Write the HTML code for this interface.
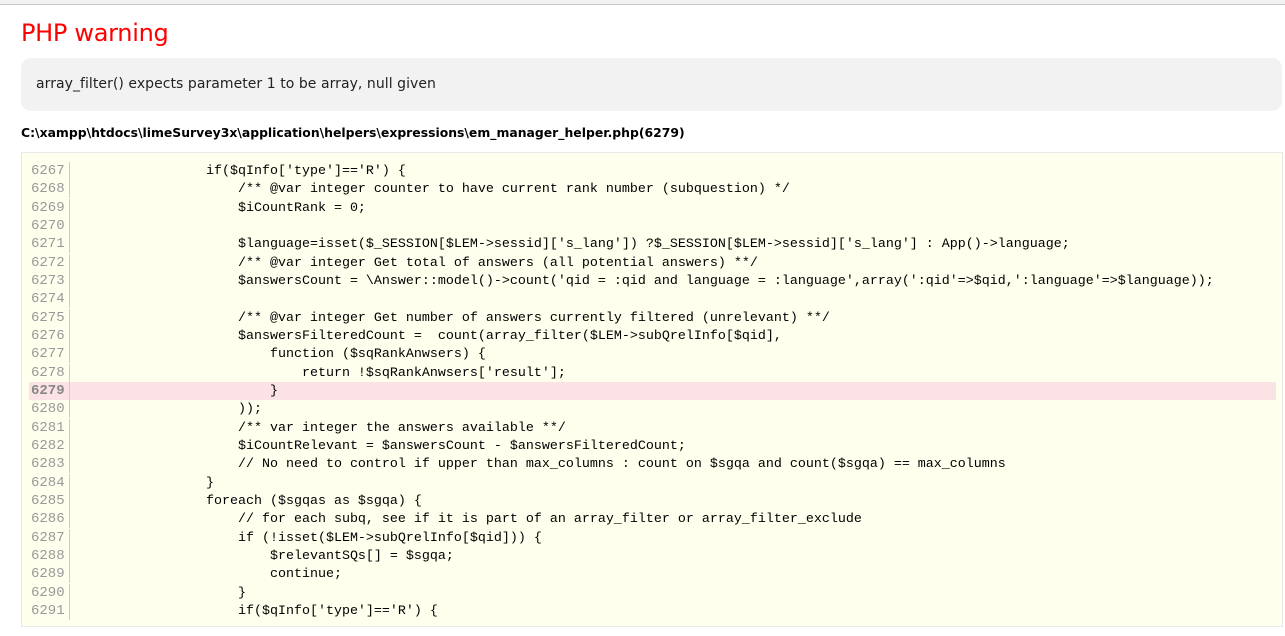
<!DOCTYPE html>
<html><head><meta charset="utf-8"><style>
body{margin:0;background:#fff;width:1285px;height:636px;overflow:hidden;font-family:"DejaVu Sans","Liberation Sans",sans-serif;}
.top{position:absolute;left:0;top:0;width:1285px;height:4px;background:#f2f2f2;border-bottom:1px solid #c8c8c8;}
h1{position:absolute;left:21px;top:19px;margin:0;font-weight:normal;color:#f00;font-size:24px;font-family:"DejaVu Sans",sans-serif;letter-spacing:-0.3px}
.msg{position:absolute;left:21px;top:58px;width:1261px;height:53px;background:#f2f2f2;border-radius:10px;}
.msg span{position:absolute;left:15px;top:18px;font-size:14px;color:#222;letter-spacing:0.05px}
.file{position:absolute;left:21px;top:125px;font-size:12.4px;font-weight:bold;color:#000}
.code{position:absolute;left:21px;top:152px;width:1260px;height:473px;background:#ffffee;border:1px solid #eaeaea;}
.ln{position:absolute;left:7px;height:18.33px;width:1247px;font-family:"Liberation Mono",monospace;font-size:13.33px;line-height:18.33px;white-space:pre;color:#000}
.ln b{display:inline-block;width:38px;color:#999;font-weight:normal;text-align:left;padding-left:2px;border-right:1px solid #ccc;margin-right:8px;height:18px;font-size:14px}
.ln.hl{background:#fbe2e4}
.ln.hl b{font-weight:bold;color:#888}
</style></head><body>
<div class="top"></div>
<h1>PHP warning</h1>
<div class="msg"><span>array_filter() expects parameter 1 to be array, null given</span></div>
<div class="file">C:\xampp\htdocs\limeSurvey3x\application\helpers\expressions\em_manager_helper.php(6279)</div>
<div class="code">
<div class="ln" style="top:9px"><b>6267</b>                if($qInfo['type']=='R') {</div>
<div class="ln" style="top:27.3px"><b>6268</b>                    /** @var integer counter to have current rank number (subquestion) */</div>
<div class="ln" style="top:45.7px"><b>6269</b>                    $iCountRank = 0;</div>
<div class="ln" style="top:64px"><b>6270</b></div>
<div class="ln" style="top:82.3px"><b>6271</b>                    $language=isset($_SESSION[$LEM->sessid]['s_lang']) ?$_SESSION[$LEM->sessid]['s_lang'] : App()->language;</div>
<div class="ln" style="top:100.7px"><b>6272</b>                    /** @var integer Get total of answers (all potential answers) **/</div>
<div class="ln" style="top:119px"><b>6273</b>                    $answersCount = \Answer::model()->count('qid = :qid and language = :language',array(':qid'=>$qid,':language'=>$language));</div>
<div class="ln" style="top:137.3px"><b>6274</b></div>
<div class="ln" style="top:155.7px"><b>6275</b>                    /** @var integer Get number of answers currently filtered (unrelevant) **/</div>
<div class="ln" style="top:174px"><b>6276</b>                    $answersFilteredCount =  count(array_filter($LEM->subQrelInfo[$qid],</div>
<div class="ln" style="top:192.3px"><b>6277</b>                        function ($sqRankAnwsers) {</div>
<div class="ln" style="top:210.7px"><b>6278</b>                            return !$sqRankAnwsers['result'];</div>
<div class="ln hl" style="top:229px"><b>6279</b>                        }</div>
<div class="ln" style="top:247.3px"><b>6280</b>                    ));</div>
<div class="ln" style="top:265.7px"><b>6281</b>                    /** var integer the answers available **/</div>
<div class="ln" style="top:284px"><b>6282</b>                    $iCountRelevant = $answersCount - $answersFilteredCount;</div>
<div class="ln" style="top:302.3px"><b>6283</b>                    // No need to control if upper than max_columns : count on $sgqa and count($sgqa) == max_columns</div>
<div class="ln" style="top:320.7px"><b>6284</b>                }</div>
<div class="ln" style="top:339px"><b>6285</b>                foreach ($sgqas as $sgqa) {</div>
<div class="ln" style="top:357.3px"><b>6286</b>                    // for each subq, see if it is part of an array_filter or array_filter_exclude</div>
<div class="ln" style="top:375.7px"><b>6287</b>                    if (!isset($LEM->subQrelInfo[$qid])) {</div>
<div class="ln" style="top:394px"><b>6288</b>                        $relevantSQs[] = $sgqa;</div>
<div class="ln" style="top:412.3px"><b>6289</b>                        continue;</div>
<div class="ln" style="top:430.7px"><b>6290</b>                    }</div>
<div class="ln" style="top:449px"><b>6291</b>                    if($qInfo['type']=='R') {</div>
</div>
</body></html>
